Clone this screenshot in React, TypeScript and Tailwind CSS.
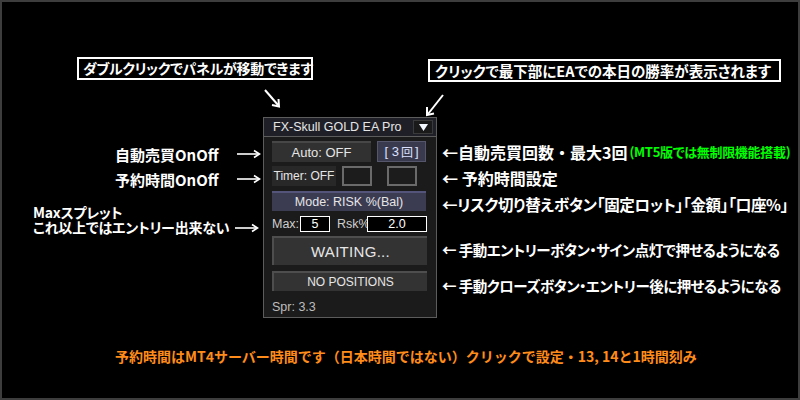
import React from 'react'

const jp = "font-['Noto_Sans_CJK_JP',sans-serif]"
const palt = "[font-feature-settings:'palt']"
const ui = "font-['Liberation_Sans',sans-serif]"

// 左側の矢印 (⟶)
const LongArrow = () => (
  <svg width="24" height="10" viewBox="0 0 24 10" className="shrink-0">
    <line x1="0" y1="5" x2="22" y2="5" stroke="white" strokeWidth="1.6" />
    <polyline points="17,1.5 22.5,5 17,8.5" fill="none" stroke="white" strokeWidth="1.6" />
  </svg>
)

function Panel() {
  return (
    <div className={`w-[174px] h-[201px] border border-[#5c5c5c] bg-[#1b1b1b] flex flex-col ${ui} text-[#e6e6e6]`}>
      {/* タイトルバー */}
      <div className="h-[20px] flex items-center justify-between bg-[#1f1f27] border-b border-[#5c5c5c] pl-[9px] pr-[3px]">
        <span className="text-[12.5px] leading-none">FX-Skull GOLD EA Pro</span>
        <div className="w-[20px] h-[14px] bg-[#1a1a1a] border border-[#3a3a3a] flex items-center justify-center">
          <svg width="9" height="7" viewBox="0 0 9 7">
            <polygon points="0,0 9,0 4.5,7" fill="#f4f8ff" />
          </svg>
        </div>
      </div>

      <div className="flex flex-col px-[8px]">
        <div className="flex gap-[6px] mt-[4px] h-[21px]">
          <div className="w-[99px] bg-[#313131] border-t-2 border-[#474747] flex items-center justify-center text-[13px]">
            Auto: OFF
          </div>
          <div className="w-[49px] bg-[#3a3a4e] border border-[#55556b] flex items-center justify-center text-[13px] text-[#dde0ff]">
            <span>[ 3 </span>
            <span className={`${jp} text-[12px] mx-[2px]`}>回</span>
            <span> ]</span>
          </div>
        </div>

        <div className="flex items-center mt-[4px] h-[20px]">
          <div className="w-[64px] h-full bg-[#282828] flex items-center justify-center text-[12px] whitespace-nowrap">
            Timer: OFF
          </div>
          <div className="w-[30px] h-full ml-[6px] border-2 border-[#6a6a6a] bg-[#1c1c1c]" />
          <div className="w-[30px] h-full ml-[15px] border-2 border-[#6a6a6a] bg-[#1c1c1c]" />
        </div>

        <div className="mt-[5px] h-[20px] w-[154px] bg-[#3b3b52] border-t-2 border-[#54547a] flex items-center justify-center text-[12.5px]">
          Mode: RISK %(Bal)
        </div>

        <div className="mt-[5px] h-[16px] flex items-center text-[12.5px] text-[#cfcfcf]">
          <span className="w-[28px]">Max:</span>
          <div className="w-[30px] h-full border border-white bg-black text-white flex items-center justify-center">5</div>
          <span className="ml-[7px] w-[30px]">Rsk%</span>
          <div className="w-[60px] h-full border border-white bg-black text-white flex items-center justify-center">2.0</div>
        </div>

        <div className="mt-[4px] h-[29px] w-[155px] bg-[#333333] border-t-2 border-l-2 border-[#4e4e4e] flex items-center justify-center text-[15px] tracking-[0.3px]">
          WAITING...
        </div>

        <div className="mt-[6px] h-[20px] w-[155px] bg-[#333333] border-t-2 border-l-2 border-[#4e4e4e] flex items-center justify-center text-[12px]">
          NO POSITIONS
        </div>

        <div className="mt-[7px] text-[12.5px] text-[#bdbdbd]">Spr: 3.3</div>
      </div>
    </div>
  )
}

export default function App() {
  return (
    <div className={`relative w-[800px] h-[400px] bg-black border-2 border-[#3d3d3d] overflow-hidden flex flex-col ${jp}`}>
      {/* 上の吹き出し */}
      <div className="h-[115px] flex items-start shrink-0">
        <div className={`ml-[75px] mt-[55px] w-[236px] border-2 border-white pl-[4px] h-[23px] flex items-center text-white text-[14px] tracking-[-0.3px] font-bold whitespace-nowrap ${palt}`}>
          ダブルクリックでパネルが移動できます
        </div>
        <div className={`ml-[115px] mt-[57px] w-[353px] border-2 border-white pl-[5px] h-[23px] flex items-center text-white text-[14.5px] tracking-[0px] font-bold whitespace-nowrap ${palt}`}>
          クリックで最下部にEAでの本日の勝率が表示されます
        </div>
      </div>

      {/* 中段 */}
      <div className="flex shrink-0 h-[201px]">
        <div className={`w-[261px] flex flex-col text-white font-bold ${palt}`}>
          <div className="mt-[27px] h-[20px] pl-[113px] flex items-center text-[15px] leading-none">
            <span className="w-[122px]">自動売買OnOff</span>
            <LongArrow />
          </div>
          <div className="mt-[5px] h-[20px] pl-[113px] flex items-center text-[15px] leading-none">
            <span className="w-[122px]">予約時間OnOff</span>
            <LongArrow />
          </div>
          <div className="mt-[16px] pl-[31px] text-[14px] tracking-[-0.2px] leading-[15px]">
            <div>Maxスプレット</div>
            <div className="flex items-center">
              <span className="w-[202px] whitespace-nowrap">これ以上ではエントリー出来ない</span>
              <LongArrow />
            </div>
          </div>
        </div>

        <Panel />

        <div className="flex-1 flex flex-col pl-[5px] text-white font-bold leading-[20px] whitespace-nowrap">
          <div className="mt-[25px] flex items-center text-[16px]">
            <span>←自動売買回数・最大3回</span>
            <span className={`ml-[2px] text-[#00ff00] text-[13px] tracking-[-0.3px] ${palt}`}>(MT5版では無制限機能搭載)</span>
          </div>
          <div className={`mt-[6px] text-[16px] ${palt}`}>← 予約時間設定</div>
          <div className={`mt-[6px] text-[15.5px] tracking-[-0.3px] ${palt}`}>←リスク切り替えボタン「固定ロット」「金額」「口座%」</div>
          <div className={`mt-[26px] text-[14.5px] tracking-[-0.5px] ${palt}`}>← 手動エントリーボタン・サイン点灯で押せるようになる</div>
          <div className={`mt-[16px] text-[14.5px] tracking-[-0.5px] ${palt}`}>← 手動クローズボタン・エントリー後に押せるようになる</div>
        </div>
      </div>

      {/* 下の注意書き */}
      <div className="mt-[28px] pl-[113px] h-[20px] leading-[20px] text-[14px] font-bold text-[#ff8c1a] whitespace-nowrap">
        予約時間はMT4サーバー時間です（日本時間ではない）クリックで設定・13, 14と1時間刻み
      </div>

      {/* 斜めの矢印 */}
      <svg className="absolute left-0 top-0 pointer-events-none" width="800" height="400">
        <line x1="263" y1="88" x2="276" y2="103" stroke="white" strokeWidth="2" />
        <polyline points="270,103 277,104.5 276.5,97" fill="none" stroke="white" strokeWidth="2" />
        <line x1="441" y1="93" x2="426" y2="112" stroke="white" strokeWidth="2" />
        <polyline points="425,105 425,113 432,111.5" fill="none" stroke="white" strokeWidth="2" />
      </svg>
    </div>
  )
}
